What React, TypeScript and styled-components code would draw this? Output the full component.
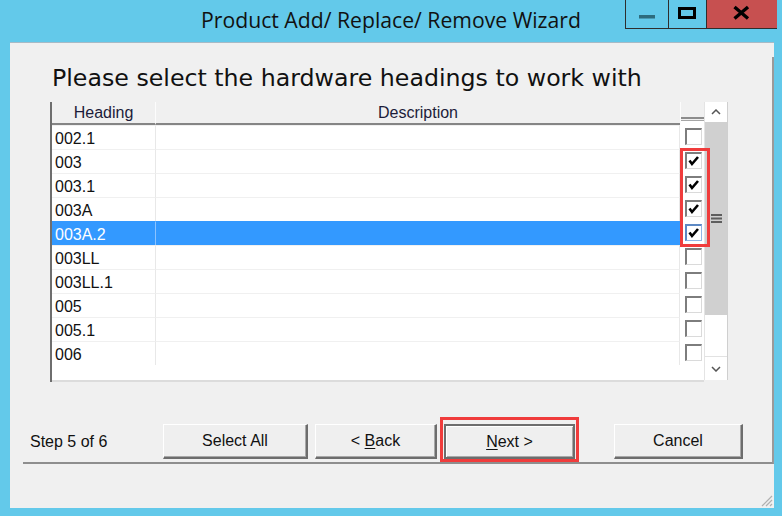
import React from "react";
import styled, { createGlobalStyle } from "styled-components";

const GlobalStyle = createGlobalStyle`
  html, body { margin: 0; padding: 0; }
  body { background: #63c9ea; overflow: hidden; }
  #root { width: 782px; height: 516px; }
`;

const Window = styled.div`
  width: 782px;
  height: 516px;
  background: #63c9ea;
  display: flex;
  flex-direction: column;
`;

const TitleBar = styled.div`
  height: 42px;
  flex: none;
  display: grid;
  grid-template-columns: 1fr auto 1fr;
  align-items: start;
`;

const Title = styled.div`
  grid-column: 2;
  padding-top: 6px;
  font-family: "Open Sans", "Noto Sans", sans-serif;
  font-size: 21.2px;
  line-height: 28px;
  color: #111;
  white-space: nowrap;
`;

const Controls = styled.div`
  grid-column: 3;
  justify-self: end;
  margin-right: 5px;
  display: flex;
  height: 29px;
  box-sizing: border-box;
  border-left: 1px solid #2e2e2e;
  border-bottom: 1px solid #2e2e2e;
`;

const CtrlButton = styled.div<{ $w: number; $close?: boolean }>`
  width: ${(p) => p.$w}px;
  height: 28px;
  flex: none;
  box-sizing: border-box;
  background: ${(p) => (p.$close ? "#c75050" : "transparent")};
  & + & {
    border-left: 1px solid #2e2e2e;
  }
  svg {
    display: block;
  }
`;

const Client = styled.div`
  flex: 1;
  margin: 0 8px 8px 10px;
  background: #f0f0f0;
  border-top: 1px solid #a7bac6;
  position: relative;
  display: flex;
  flex-direction: column;
`;

const Panel = styled.div`
  margin: 14px 0 0 13px;
  height: 407px;
  box-sizing: border-box;
  border-right: 2px solid #9a9a9a;
  border-bottom: 2px solid #8e8e8e;
  display: flex;
  flex-direction: column;
`;

const Heading = styled.h1`
  margin: 8px 0 0 29px;
  font-family: "DejaVu Sans", sans-serif;
  font-weight: normal;
  font-size: 23.7px;
  line-height: 26px;
  height: 26px;
  color: #111;
  white-space: nowrap;
`;

const Grid = styled.div`
  position: relative;
  margin: 11px 0 0 27px;
  width: 678px;
  height: 280px;
  box-sizing: border-box;
  border-left: 2px solid #6e6e6e;
  display: flex;
  background: #f0f0f0;
`;

const Table = styled.div`
  width: 652px;
  height: 280px;
  box-sizing: border-box;
  display: flex;
  flex-direction: column;
  background: #fff;
  border-bottom: 2px solid #dcdcdc;
`;

const HeaderRow = styled.div`
  display: grid;
  grid-template-columns: 104px 524px 24px;
  height: 23px;
  flex: none;
  background: #f0f0f0;
`;

const HeaderCell = styled.div<{ $sep?: boolean }>`
  box-sizing: border-box;
  border-bottom: 2px solid #858585;
  border-right: ${(p) => (p.$sep ? "1px solid #fcfcfc" : "none")};
  text-align: center;
  font-family: "Liberation Sans", Arial, sans-serif;
  font-size: 16px;
  line-height: 21px;
  color: #1c1c3a;
`;

const CheckHeader = styled.div`
  border-left: 1px solid #fcfcfc;
  background: linear-gradient(
    to bottom,
    #f0f0f0 0 15px,
    #8c8c8c 15px 17px,
    #f0f0f0 17px 18px,
    #a6a6a6 18px 19px,
    #ffffff 19px
  );
`;

const Body = styled.div`
  display: flex;
  flex-direction: column;
`;

const Row = styled.div`
  display: grid;
  grid-template-columns: 104px 524px 24px;
  height: 24px;
`;

const DataCell = styled.div<{ $sel?: boolean; $key?: boolean }>`
  box-sizing: border-box;
  border-top: 1px solid ${(p) => (p.$sel ? "#3399ff" : "#f0f0f0")};
  border-right: 1px solid ${(p) => (p.$sel ? (p.$key ? "#8cc3ff" : "#3399ff") : "#e8e8e8")};
  background: ${(p) => (p.$sel ? "#3399ff" : "#ffffff")};
  color: ${(p) => (p.$sel ? "#ffffff" : "#111")};
  padding: 3px 0 0 3px;
  font-family: "Liberation Sans", Arial, sans-serif;
  font-size: 16px;
  line-height: 20px;
  white-space: nowrap;
`;

const CheckCell = styled.div`
  background: #fff;
  padding: 3px 0 0 5px;
`;

const Box = styled.div<{ $focus?: boolean }>`
  width: 17px;
  height: 17px;
  box-sizing: border-box;
  background: #fff;
  border-top: 2px solid ${(p) => (p.$focus ? "#5d89c4" : "#7d7d7d")};
  border-left: 2px solid ${(p) => (p.$focus ? "#5d89c4" : "#7d7d7d")};
  border-right: 1px solid ${(p) => (p.$focus ? "#8fb6e6" : "#dadada")};
  border-bottom: 1px solid ${(p) => (p.$focus ? "#8fb6e6" : "#dadada")};
  svg {
    display: block;
  }
`;

const Scrollbar = styled.div`
  width: 24px;
  height: 278px;
  display: flex;
  flex-direction: column;
  box-sizing: border-box;
  border-left: 1px solid #e4e4e4;
  border-right: 1px solid #cfcfcf;
  background: #fff;
`;

const ArrowButton = styled.div<{ $h: number; $down?: boolean }>`
  height: ${(p) => p.$h}px;
  flex: none;
  background: #fff;
  display: flex;
  align-items: center;
  justify-content: center;
  box-sizing: border-box;
  border-top: ${(p) => (p.$down ? "1px solid #e2e2e2" : "none")};
`;

const Thumb = styled.div`
  height: 193px;
  flex: none;
  background: #d0d0d0;
  display: flex;
  align-items: center;
  justify-content: center;
`;

const Track = styled.div`
  flex: 1;
  background: #fff;
`;

const Highlight = styled.div`
  position: absolute;
  left: 628px;
  top: 46px;
  width: 30px;
  height: 99px;
  box-sizing: border-box;
  border: 3px solid #f03c3c;
  pointer-events: none;
`;

const Footer = styled.div`
  margin-top: 42px;
  height: 35px;
  flex: none;
  display: flex;
  align-items: stretch;
  gap: 7px;
  padding-left: 7px;
`;

const StepLabel = styled.div`
  width: 126px;
  display: flex;
  align-items: center;
  font-family: "Liberation Sans", Arial, sans-serif;
  font-size: 16px;
  color: #111;
`;

const WizardButton = styled.div<{ $w: number; $default?: boolean; $gapBefore?: number }>`
  width: ${(p) => p.$w}px;
  margin-left: ${(p) => p.$gapBefore ?? 0}px;
  box-sizing: border-box;
  display: flex;
  align-items: center;
  justify-content: center;
  background: #efefef;
  font-family: "Liberation Sans", Arial, sans-serif;
  font-size: 16px;
  color: #111;
  ${(p) =>
    p.$default
      ? `border: 2px solid #6d6d6d; box-shadow: inset 1px 1px #ffffff, inset -1px -1px #a8a8a8;`
      : `border-top: 1px solid #ffffff; border-left: 1px solid #ffffff;
         border-right: 2px solid #6d6d6d; border-bottom: 2px solid #6d6d6d;
         box-shadow: inset -1px -1px #a8a8a8;`}
  u {
    text-decoration: underline;
    text-underline-offset: 2px;
  }
`;

const Marked = styled.div`
  position: relative;
  display: flex;
  &::after {
    content: "";
    position: absolute;
    top: -7px;
    left: -4px;
    right: -4px;
    bottom: -3px;
    border: 3px solid #f03c3c;
    pointer-events: none;
  }
`;

const Grip = styled.svg`
  position: absolute;
  right: 1px;
  bottom: 1px;
`;

type Item = { key: string; checked: boolean; selected?: boolean };

const items: Item[] = [
  { key: "002.1", checked: false },
  { key: "003", checked: true },
  { key: "003.1", checked: true },
  { key: "003A", checked: true },
  { key: "003A.2", checked: true, selected: true },
  { key: "003LL", checked: false },
  { key: "003LL.1", checked: false },
  { key: "005", checked: false },
  { key: "005.1", checked: false },
  { key: "006", checked: false },
];

const Check = () => (
  <svg width="14" height="14" viewBox="0 0 14 14">
    <polyline points="2.5,6.5 5,10 11,3" fill="none" stroke="#000" strokeWidth="2.6" />
  </svg>
);

export default function App() {
  return (
    <>
      <GlobalStyle />
      <Window>
        <TitleBar>
          <Title>Product Add/ Replace/ Remove Wizard</Title>
          <Controls>
            <CtrlButton $w={42}>
              <svg width="42" height="28">
                <rect x="13" y="15" width="16" height="3.5" fill="#2d6b7d" />
              </svg>
            </CtrlButton>
            <CtrlButton $w={38}>
              <svg width="37" height="28">
                <rect x="10.5" y="8.5" width="15" height="9" fill="none" stroke="#000" strokeWidth="3" />
              </svg>
            </CtrlButton>
            <CtrlButton $w={71} $close>
              <svg width="70" height="28">
                <path d="M27.5 7 L41 18.5 M41 7 L27.5 18.5" stroke="#000" strokeWidth="3.4" />
              </svg>
            </CtrlButton>
          </Controls>
        </TitleBar>
        <Client>
          <Panel>
            <Heading>Please select the hardware headings to work with</Heading>
            <Grid>
              <Table>
                <HeaderRow>
                  <HeaderCell $sep>Heading</HeaderCell>
                  <HeaderCell>Description</HeaderCell>
                  <CheckHeader />
                </HeaderRow>
                <Body>
                  {items.map((it) => (
                    <Row key={it.key}>
                      <DataCell $sel={it.selected} $key>
                        {it.key}
                      </DataCell>
                      <DataCell $sel={it.selected} />
                      <CheckCell>
                        <Box $focus={it.selected}>{it.checked && <Check />}</Box>
                      </CheckCell>
                    </Row>
                  ))}
                </Body>
              </Table>
              <Scrollbar>
                <ArrowButton $h={20}>
                  <svg width="10" height="6">
                    <polyline points="1,5 5,1 9,5" fill="none" stroke="#555" strokeWidth="1.5" />
                  </svg>
                </ArrowButton>
                <Thumb>
                  <svg width="11" height="9">
                    <path d="M0 1 H11 M0 4.5 H11 M0 8 H11" stroke="#5e5e5e" strokeWidth="1.8" />
                  </svg>
                </Thumb>
                <Track />
                <ArrowButton $h={24} $down>
                  <svg width="10" height="6">
                    <polyline points="1,1 5,5 9,1" fill="none" stroke="#555" strokeWidth="1.5" />
                  </svg>
                </ArrowButton>
              </Scrollbar>
              <Highlight />
            </Grid>
            <Footer>
              <StepLabel>Step 5 of 6</StepLabel>
              <WizardButton $w={145}>Select All</WizardButton>
              <WizardButton $w={122}>
                &lt;&nbsp;<u>B</u>ack
              </WizardButton>
              <Marked>
                <WizardButton $w={131} $default>
                  <u>N</u>ext &gt;
                </WizardButton>
              </Marked>
              <WizardButton $w={129} $gapBefore={32}>
                Cancel
              </WizardButton>
            </Footer>
          </Panel>
          <Grip width="14" height="14">
            <path d="M13 3 L3 13 M13 7 L7 13 M13 11 L11 13" stroke="#b0b0b0" strokeWidth="1.2" />
          </Grip>
        </Client>
      </Window>
    </>
  );
}
